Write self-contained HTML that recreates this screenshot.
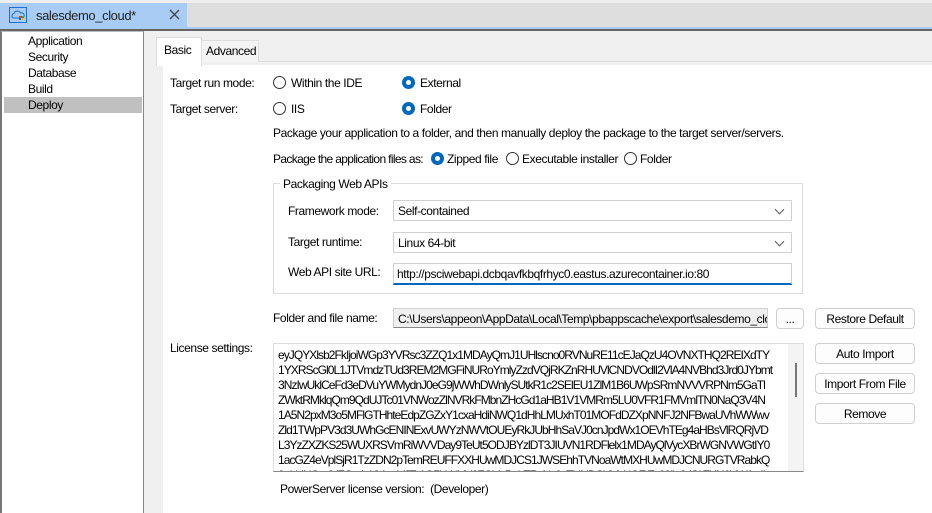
<!DOCTYPE html>
<html><head><meta charset="utf-8"><style>
*{margin:0;padding:0;box-sizing:border-box}
body{width:932px;height:513px;overflow:hidden;background:#f0f0f0;font-family:"Liberation Sans",sans-serif;font-size:12px;letter-spacing:-0.4px;color:#000;position:relative}
.a{position:absolute;white-space:nowrap}
.rad{position:absolute;width:13px;height:13px;border:1px solid #333;border-radius:50%;background:#fff}
.rad.on{border:none;background:#0067c0}
.rad.on::after{content:"";position:absolute;left:4px;top:4px;width:5px;height:5px;border-radius:50%;background:#fff}
.box{position:absolute;background:#fff;border:1px solid #d0d0d0;border-bottom:1px solid #888}
.btn{position:absolute;background:#fdfdfd;border:1px solid #d0d0d0;border-radius:4px;text-align:center;line-height:20px}
.chev{position:absolute;right:8px;top:5px;width:7px;height:7px;border-right:1px solid #555;border-bottom:1px solid #555;transform:rotate(45deg)}
</style></head><body>
<div class="a" style="left:0;top:0;width:932px;height:3px;background:#eee"></div>
<div class="a" style="left:0;top:3px;width:932px;height:24px;background:#dedede"></div>
<div class="a" style="left:0;top:3px;width:187px;height:24px;background:#a8ccf3"></div>
<div class="a" style="left:0;top:27px;width:932px;height:2px;background:#a8ccf3"></div>
<div class="a" style="left:0;top:29px;width:932px;height:2px;background:#666"></div>
<svg class="a" style="left:9px;top:7px" width="18" height="16" viewBox="0 0 18 16"><rect x="0.5" y="0.5" width="17" height="15" fill="none" stroke="#1e6fd0"/><path d="M4 11 a2.5 2.5 0 0 1 1-4.5 a3.5 3.5 0 0 1 6.5-0.5 a2.5 2.5 0 0 1 2 5z" fill="none" stroke="#1e6fd0"/><rect x="10" y="9" width="2" height="2" fill="#e33"/><rect x="12" y="9" width="2" height="2" fill="#2a2"/><rect x="10" y="11" width="2" height="2" fill="#26c"/><rect x="12" y="11" width="2" height="2" fill="#fb0"/></svg>
<div class="a" style="left:36px;top:8px;font-size:13px;color:#222">salesdemo_cloud*</div>
<svg class="a" style="left:169px;top:9px" width="11" height="11" viewBox="0 0 11 11"><path d="M1 1L10 10M10 1L1 10" stroke="#444" stroke-width="1.3"/></svg>

<div class="a" style="left:0;top:31px;width:144px;height:482px;background:#fff;border-left:2px solid #777;border-right:1px solid #888;border-top:1px solid #bbb"></div>
<div class="a" style="left:4px;top:97px;width:138px;height:16px;background:#c0c0c0"></div>
<div class="a" style="left:28px;top:33px;line-height:16px">Application<br>Security<br>Database<br>Build<br>Deploy</div>

<div class="a" style="left:163px;top:65px;width:769px;height:448px;background:#fff"></div>
<div class="a" style="left:157px;top:61px;width:775px;height:1px;background:#ddd"></div>
<div class="a" style="left:201px;top:40px;width:58px;height:22px;background:#f4f4f4;border:1px solid #ddd;border-bottom:none"></div>
<div class="a" style="left:206px;top:44px">Advanced</div>
<div class="a" style="left:156px;top:37px;width:46px;height:29px;background:#fff;border:1px solid #ddd;border-bottom:none"></div>
<div class="a" style="left:164px;top:43px">Basic</div>

<div class="a" style="left:170px;top:76px">Target run mode:</div>
<div class="rad" style="left:273px;top:76px"></div><div class="a" style="left:291px;top:76px">Within the IDE</div>
<div class="rad on" style="left:402px;top:76px"></div><div class="a" style="left:420px;top:76px">External</div>
<div class="a" style="left:170px;top:102px">Target server:</div>
<div class="rad" style="left:273px;top:102px"></div><div class="a" style="left:291px;top:102px">IIS</div>
<div class="rad on" style="left:402px;top:102px"></div><div class="a" style="left:420px;top:102px">Folder</div>
<div class="a" style="left:273px;top:126px">Package your application to a folder, and then manually deploy the package to the target server/servers.</div>
<div class="a" style="left:273px;top:152px;letter-spacing:-0.65px">Package the application files as:</div>
<div class="rad on" style="left:431px;top:152px"></div><div class="a" style="left:447px;top:152px">Zipped file</div>
<div class="rad" style="left:506px;top:152px"></div><div class="a" style="left:522px;top:152px">Executable installer</div>
<div class="rad" style="left:624px;top:152px"></div><div class="a" style="left:640px;top:152px">Folder</div>

<div class="a" style="left:273px;top:183px;width:530px;height:111px;border:1px solid #ddd"></div>
<div class="a" style="left:280px;top:177px;background:#fff;padding:0 3px">Packaging Web APIs</div>
<div class="a" style="left:288px;top:204px">Framework mode:</div>
<div class="box" style="left:393px;top:200px;width:399px;height:21px;border-bottom-color:#d0d0d0"><span class="a" style="left:4px;top:3px">Self-contained</span><i class="chev"></i></div>
<div class="a" style="left:288px;top:235px">Target runtime:</div>
<div class="box" style="left:393px;top:232px;width:399px;height:21px;border-bottom-color:#d0d0d0"><span class="a" style="left:4px;top:3px">Linux 64-bit</span><i class="chev"></i></div>
<div class="a" style="left:288px;top:265px">Web API site URL:</div>
<div class="box" style="left:393px;top:263px;width:399px;height:22px;border-bottom:2px solid #0067c0"><span class="a" style="left:3px;top:3px">http://psciwebapi.dcbqavfkbqfrhyc0.eastus.azurecontainer.io:80</span></div>

<div class="a" style="left:273px;top:311px">Folder and file name:</div>
<div class="box" style="left:393px;top:308px;width:375px;height:20px;background:#f0f0f0;overflow:hidden"><span class="a" style="left:4px;top:3px">C:\Users\appeon\AppData\Local\Temp\pbappscache\export\salesdemo_cloud</span></div>
<div class="btn" style="left:776px;top:308px;width:28px;height:21px">...</div>
<div class="btn" style="left:815px;top:308px;width:100px;height:21px">Restore Default</div>

<div class="a" style="left:170px;top:341px">License settings:</div>
<div class="a" style="left:273px;top:343px;width:531px;height:129px;background:#fff;border:1px solid #ddd;border-bottom:1px solid #888;overflow:hidden">
<div class="a" style="left:4px;top:4px;width:508px;overflow:hidden;line-height:15px;letter-spacing:-0.95px">eyJQYXlsb2FkIjoiWGp3YVRsc3ZZQ1x1MDAyQmJ1UHlscno0RVNuRE11cEJaQzU4OVNXTHQ2REIXdTY<br>1YXRScGl0L1JTVmdzTUd3REM2MGFiNURoYmlyZzdVQjRKZnRHUVlCNDVOdlI2VlA4NVBhd3Jrd0JYbmt<br>3NzIwUklCeFd3eDVuYWMydnJ0eG9jWWhDWnlySUtkR1c2SElEU1ZlM1B6UWpSRmNVVVRPNm5GaTl<br>ZWktRMklqQm9QdUJTc01VNWozZlNVRkFMbnZHcGd1aHB1V1VMRm5LU0VFR1FMVmlTN0NaQ3V4N<br>1A5N2pxM3o5MFlGTHhteEdpZGZxY1cxaHdiNWQ1dHhLMUxhT01MOFdDZXpNNFJ2NFBwaUVhWWwv<br>Zld1TWpPV3d3UWhGcENINExvUWYzNWVtOUEyRkJUbHhSaVJ0cnJpdWx1OEVhTEg4aHBsVlRQRjVD<br>L3YzZXZKS25WUXRSVmRiWVVDay9TeUt5ODJBYzlDT3JIUVN1RDFlelx1MDAyQlVycXBrWGNVWGtIY0<br>1acGZ4eVplSjR1TzZDN2pTemREUFFXXHUwMDJCS1JWSEhhTVNoaWtMXHUwMDJCNURGTVRabkQ<br>0aUdNQndYZGp4eXVwaVJTc1Q5bkNYY2ZGVnBnbTRzNy9yTHNDSHVVdGFtZz09liwiVGltZXN0YW1wIj<br>owNjcwMTU1NDk3LCJTaWduYXR1cmUiOiJDcDJvMXc3ZENodVcwd01YSmhhTdVMDZZZEZzE1ZQ2hU</div>
<div class="a" style="left:514px;top:0;width:16px;height:128px;background:#f4f4f4"></div>
<div class="a" style="left:521px;top:19px;width:2px;height:34px;background:#777"></div>
</div>
<div class="btn" style="left:815px;top:343px;width:100px;height:21px">Auto Import</div>
<div class="btn" style="left:815px;top:373px;width:100px;height:21px">Import From File</div>
<div class="btn" style="left:815px;top:403px;width:100px;height:21px">Remove</div>
<div class="a" style="left:280px;top:482px">PowerServer license version:&nbsp; (Developer)</div>
</body></html>
